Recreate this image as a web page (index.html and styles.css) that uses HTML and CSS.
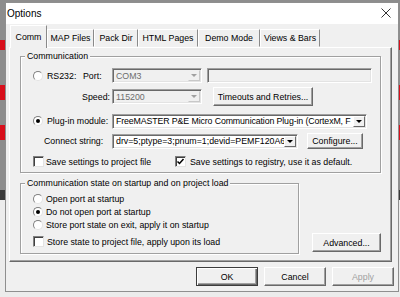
FILE: index.html
```html
<!DOCTYPE html>
<html lang="en">
<head>
    <meta charset="UTF-8">
    <title>Options</title>
    <link rel="stylesheet" href="styles.css">
</head>
<body>

    <div class="window">
        <!-- Title bar -->
        <div class="titlebar">
            <span class="title">Options</span>
            <svg class="close" width="10" height="10" viewBox="0 0 10 10">
                <path d="M0.5 0.5 L9.5 9.5 M9.5 0.5 L0.5 9.5" stroke="#333" stroke-width="1" fill="none"/>
            </svg>
        </div>

        <div class="client">
            <!-- Tabs -->
            <div class="tabs">
                <div class="tab active t-comm">Comm</div>
                <div class="tab t-map">MAP Files</div>
                <div class="tab t-pack">Pack Dir</div>
                <div class="tab t-html">HTML Pages</div>
                <div class="tab t-demo">Demo Mode</div>
                <div class="tab t-views">Views &amp; Bars</div>
            </div>

            <div class="panel">
                <!-- Communication group -->
                <fieldset class="group group-comm">
                    <legend>Communication</legend>
                    <div class="group-body comm-body">
                        <div class="row r1">
                            <span class="radio"></span>
                            <span class="lbl l-rs">RS232:</span>
                            <span class="lbl l-port">Port:</span>
                            <div class="combo disabled w-port">
                                <span class="combo-text">COM3</span>
                                <span class="combo-btn"><span class="arrow"></span></span>
                            </div>
                            <div class="edit disabled"></div>
                        </div>
                        <div class="row r2">
                            <span class="lbl l-speed">Speed:</span>
                            <div class="combo disabled w-port">
                                <span class="combo-text">115200</span>
                                <span class="combo-btn"><span class="arrow"></span></span>
                            </div>
                            <button class="btn b-timeouts">Timeouts and Retries...</button>
                        </div>
                        <div class="row r3">
                            <span class="radio checked"></span>
                            <span class="lbl l-plugin">Plug-in module:</span>
                            <div class="combo w-plugin">
                                <span class="combo-text">FreeMASTER P&amp;E Micro Communication Plug-in (CortexM, F</span>
                                <span class="combo-btn"><span class="arrow"></span></span>
                            </div>
                        </div>
                        <div class="row r4">
                            <span class="lbl l-connect">Connect string:</span>
                            <div class="combo w-connect">
                                <span class="combo-text">drv=5;ptype=3;pnum=1;devid=PEMF120A6</span>
                                <span class="combo-btn"><span class="arrow"></span></span>
                            </div>
                            <button class="btn b-configure">Configure...</button>
                        </div>
                        <div class="row r5">
                            <div class="opt o-project">
                                <span class="check"></span>
                                <span>Save settings to project file</span>
                            </div>
                            <div class="opt o-registry">
                                <span class="check">
                                    <svg width="9" height="9" viewBox="0 0 9 9">
                                        <path d="M1.5 4.5 L3.5 6.5 L7.5 2" stroke="#000" stroke-width="1.5" fill="none"/>
                                    </svg>
                                </span>
                                <span>Save settings to registry, use it as default.</span>
                            </div>
                        </div>
                    </div>
                </fieldset>

                <!-- Startup state group -->
                <div class="state-row">
                    <fieldset class="group group-state">
                        <legend>Communication state on startup and on project load</legend>
                        <div class="group-body state-body">
                            <div class="srow"><span class="radio"></span>Open port at startup</div>
                            <div class="srow"><span class="radio checked"></span>Do not open port at startup</div>
                            <div class="srow"><span class="radio"></span>Store port state on exit, apply it on startup</div>
                            <div class="srow crow"><span class="check"></span>Store state to project file, apply upon its load</div>
                        </div>
                    </fieldset>
                    <button class="btn b-advanced">Advanced...</button>
                </div>
            </div>

            <!-- Dialog buttons -->
            <div class="actions">
                <button class="btn default">OK</button>
                <button class="btn">Cancel</button>
                <button class="btn grayed">Apply</button>
            </div>
        </div>
    </div>

</body>
</html>
```

FILE: styles.css
```css
* {
    box-sizing: border-box;
}

body {
    margin: 0;
    width: 400px;
    height: 297px;
    overflow: hidden;
    padding: 2px 0 0 5px;
    font-family: "Liberation Sans", Arial, sans-serif;
    font-size: 8.8px;
    color: #000;
    /* bits of the desktop showing behind the dialog */
    background: linear-gradient(to bottom,
        #8d8d8d 0 40px, #d8101c 40px 50px,
        #8d8d8d 50px 85px, #d8101c 85px 100px,
        #8d8d8d 100px 125px, #d8101c 125px 140px,
        #8d8d8d 140px 190px, #3a3a3a 190px 200px,
        #ececec 200px);
}

.window {
    width: 394px;
    height: 290px;
    border: 1px solid #8f8f8f;
    background: #f0f0f0;
    display: flex;
    flex-direction: column;
}

.titlebar {
    height: 21px;
    background: #fff;
    display: flex;
    align-items: center;
    justify-content: space-between;
    padding: 0 7px 1px 1px;
}

.title {
    font-size: 10px;
}

.client {
    flex: 1;
    padding: 1px 0 0 3px;
}

/* Tabs */
.tabs {
    height: 22px;
    display: flex;
    align-items: flex-end;
    padding-left: 1px;
}

.tab {
    height: 18px;
    line-height: 16px;
    text-align: center;
    border: 1px solid;
    border-color: #fff #8a8a8a transparent #fff;
    white-space: nowrap;
}

.tab.active {
    height: 23px;
    margin-bottom: -1px;
    padding-top: 3px;
    position: relative;
    z-index: 1;
    background: #f0f0f0;
    border-bottom: none;
}

.t-comm { width: 37px; }
.t-map { width: 47px; }
.t-pack { width: 44px; }
.t-html { width: 60px; }
.t-demo { width: 62px; }
.t-views { width: 60px; }

.panel {
    width: 383px;
    height: 215px;
    border: 1px solid;
    border-color: #fff #696969 #696969 #fff;
    box-shadow: inset -1px -1px 0 #a0a0a0;
    padding-left: 10px;
}

/* Group boxes */
.group {
    margin: 3px 0 0 0;
    padding: 0;
    min-inline-size: 0;
    border: 1px solid #a0a0a0;
    box-shadow: inset 1px 1px 0 #fff, 1px 1px 0 #fff;
}

.group legend {
    margin-left: 4px;
    padding: 0 2px;
    line-height: 11px;
    background: #f0f0f0;
}

.group-comm {
    width: 361px;
}

.comm-body {
    padding: 6px 0 5px 12px;
}

.row {
    display: flex;
    align-items: center;
    white-space: nowrap;
}

.r1 { height: 15px; margin-bottom: 4px; }
.r2 { height: 19px; margin-bottom: 7px; }
.r3 { height: 16px; margin-bottom: 4px; }
.r4 { height: 16px; margin-bottom: 7px; }
.r5 { height: 11px; }

.lbl {
    display: inline-block;
    flex: none;
}

.l-rs { width: 36px; margin-left: 4px; }
.l-port { width: 29px; }
.l-speed { width: 79px; text-align: right; padding-right: 2px; }
.l-plugin { width: 65px; margin-left: 4px; }
.l-connect { width: 79px; padding-left: 11px; }

/* Combo boxes and edits */
.combo,
.edit {
    height: 15px;
    flex: none;
    border: 1px solid;
    border-color: #a0a0a0 #fff #fff #a0a0a0;
    box-shadow: inset 1px 1px 0 #696969, inset -1px -1px 0 #e3e3e3;
    background: #fff;
    display: flex;
    align-items: center;
    overflow: hidden;
}

.combo-text {
    flex: 1;
    padding-left: 3px;
    overflow: hidden;
    white-space: nowrap;
}

.w-plugin .combo-text {
    letter-spacing: -0.12px;
}

.combo-btn {
    width: 12px;
    height: 11px;
    margin-right: 1px;
    flex: none;
    border: 1px solid;
    border-color: #fff #696969 #696969 #fff;
    background: #f0f0f0;
    display: flex;
    align-items: center;
    justify-content: center;
}

.arrow {
    width: 0;
    height: 0;
    border-left: 3px solid transparent;
    border-right: 3px solid transparent;
    border-top: 3px solid #000;
}

.combo.disabled,
.edit.disabled {
    background: #f0f0f0;
    color: #6d6d6d;
}

.combo.disabled .combo-btn {
    border-color: #f0f0f0 #c8c8c8 #c8c8c8 #f0f0f0;
}

.combo.disabled .arrow {
    border-top-color: #a0a0a0;
}

.w-port { width: 90px; }
.w-plugin { width: 255px; }
.w-connect { width: 186px; }

.edit {
    width: 165px;
    margin-left: 5px;
}

/* Buttons */
.btn {
    height: 19px;
    width: 62px;
    padding: 0;
    flex: none;
    font: inherit;
    color: #000;
    background: #f0f0f0;
    border: 1px solid;
    border-color: #fff #696969 #696969 #fff;
    box-shadow: inset -1px -1px 0 #a0a0a0;
    white-space: nowrap;
}

.btn.default {
    border: 1px solid #3c3c3c;
    box-shadow: inset 1px 1px 0 #fff, inset -1px -1px 0 #696969, inset -2px -2px 0 #a0a0a0;
}

.btn.grayed {
    color: #a0a0a0;
}

.b-timeouts { width: 100px; margin-left: 11px; }
.b-configure { width: 56px; height: 16px; margin-left: 9px; }
.b-advanced { width: 69px; margin: 0 0 2px 13px; }

/* Radios and checkboxes */
.radio {
    width: 10px;
    height: 10px;
    border-radius: 50%;
    background: #fff;
    border: 1px solid;
    border-color: #808080 #e3e3e3 #e3e3e3 #808080;
    display: inline-flex;
    align-items: center;
    justify-content: center;
    flex: none;
}

.radio.checked::after {
    content: "";
    width: 4px;
    height: 4px;
    border-radius: 50%;
    background: #000;
}

.check {
    width: 11px;
    height: 11px;
    background: #fff;
    border: 1px solid;
    border-color: #808080 #e3e3e3 #e3e3e3 #808080;
    box-shadow: inset 1px 1px 0 #404040;
    display: inline-flex;
    align-items: center;
    justify-content: center;
    flex: none;
    margin-right: 2px;
}

.opt {
    display: flex;
    align-items: center;
    flex: none;
    white-space: nowrap;
}

.o-project {
    width: 142px;
}

.o-registry .check {
    margin-right: 4px;
}

/* Startup state group */
.state-row {
    display: flex;
    align-items: flex-end;
    margin-top: 5px;
}

.group-state {
    width: 279px;
    margin: 0;
}

.state-body {
    padding: 3px 0 6px 12px;
}

.srow {
    height: 13px;
    display: flex;
    align-items: center;
    gap: 3px;
    white-space: nowrap;
}

.srow.crow {
    height: 11px;
    margin-top: 5px;
    gap: 1px;
}

/* Bottom buttons */
.actions {
    display: flex;
    justify-content: flex-end;
    gap: 6px;
    margin-top: 5px;
    padding-right: 4px;
}
```
